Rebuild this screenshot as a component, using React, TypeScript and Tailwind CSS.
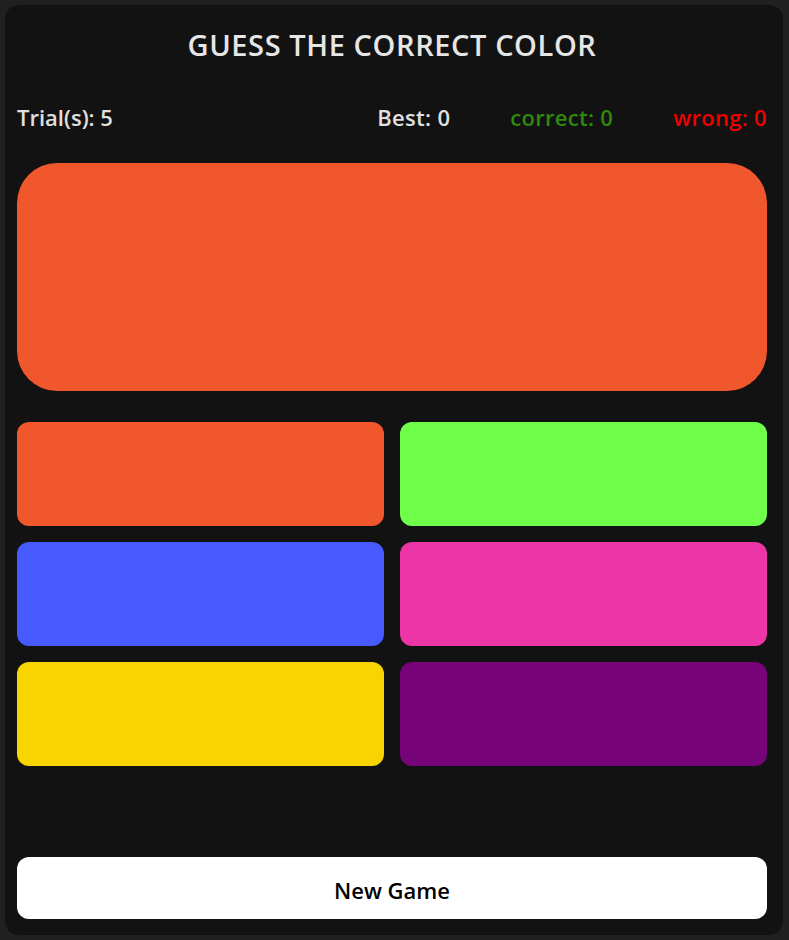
import React from "react";

const options = [
  "bg-[#f0572c]",
  "bg-[#6fff4a]",
  "bg-[#465aff]",
  "bg-[#ee35a8]",
  "bg-[#f8d500]",
  "bg-[#77037b]",
];

export default function App() {
  return (
    <div
      className="min-h-[940px] w-full bg-[#202020] py-[5px] pl-[5px] pr-[6px]"
      style={{ fontFamily: '"Open Sans", "Noto Sans", sans-serif' }}
    >
      <div className="flex h-[930px] flex-col rounded-[14px] bg-[#121212] pb-[16px] pl-[12px] pr-[16px] pt-[12px]">
        <h1 className="flex h-[56px] items-center justify-center text-[29px] font-semibold tracking-[0.6px] text-[#e6e6e6]">
          GUESS THE CORRECT COLOR
        </h1>
        <div className="mt-[24px] flex h-[40px] items-center justify-between text-[22px] font-semibold">
          <span className="text-[#e0e0e0]">Trial(s): 5</span>
          <div className="flex items-center gap-[60px] tracking-[0.3px]">
            <span className="text-[#e0e0e0]">Best: 0</span>
            <span className="text-[#2e8a0c]">correct: 0</span>
            <span className="text-[#f00000]">wrong: 0</span>
          </div>
        </div>
        <div className="mt-[26px] h-[228px] rounded-[40px] bg-[#f0572c]" />
        <div className="mt-[31px] grid grid-cols-2 gap-[16px]">
          {options.map((c, i) => (
            <button key={i} className={`h-[104px] rounded-[12px] ${c}`} />
          ))}
        </div>
        <button className="mt-auto h-[62px] rounded-[12px] bg-white pt-[4px] text-[22px] font-semibold text-black">
          New Game
        </button>
      </div>
    </div>
  );
}
